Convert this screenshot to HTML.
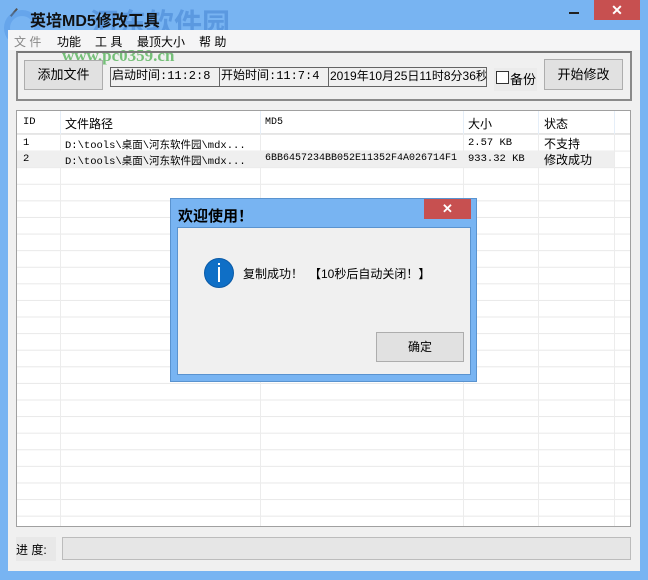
<!DOCTYPE html>
<html><head><meta charset="utf-8"><style>
*{margin:0;padding:0;box-sizing:border-box}
body{width:648px;height:580px;overflow:hidden;background:#78b4f2;font-family:"Liberation Sans","Noto Sans CJK SC",sans-serif;font-size:12px;color:#000;position:relative}
.a{position:absolute}
.client{left:8px;top:30px;width:632px;height:541px;background:#f0f0f0}
.menu{left:8px;top:30px;width:632px;height:20px;background:#f5f5f6}
.menu span{position:absolute;top:3px;font-size:12px}
.btn{background:#e1e1e1;border:1px solid #adadad;text-align:center;font-size:13px}
.tb{border:1px solid #646464;background:#f0f0f0;font-family:"Liberation Mono","Noto Sans CJK SC",monospace;font-size:12px;line-height:17px;padding-left:1px;white-space:nowrap;overflow:hidden}
.list{left:16px;top:110px;width:615px;height:417px;background:#fff;border:1px solid #a0a0a0;
background-image:linear-gradient(#e8e8e8 1px,transparent 1px);background-size:100% 16.6px;background-position:0 23px}
.vl{position:absolute;top:0;bottom:0;width:1px;background:#ececec}
.cell{position:absolute;font-family:"Liberation Mono","Noto Sans CJK SC",monospace;font-size:10.5px;white-space:nowrap}
</style></head><body>
<div class="a" style="left:12px;top:10px;width:10px;height:10px;border-left:2px solid #555;transform:rotate(40deg)"></div>
<div class="a" style="left:90px;top:2px;font-size:28px;font-weight:bold;color:#3f7fd0;opacity:.5">河东软件园</div>
<div class="a" style="left:4px;top:10px;width:36px;height:36px;border-radius:50%;border:6px solid #4a8ee0;opacity:.4"></div>
<div class="a" style="left:30px;top:7px;font-size:16px;font-weight:bold;color:#111">英培MD5修改工具</div>
<div class="a" style="left:569px;top:12px;width:10px;height:2px;background:#222"></div>
<div class="a" style="left:594px;top:0;width:46px;height:20px;background:#c75050;color:#fff;text-align:center;font-size:14px;line-height:20px;font-weight:bold">✕</div>
<div class="a client"></div>
<div class="a menu"><span style="left:6px;color:#888">文 件</span><span style="left:49px">功能</span><span style="left:87px">工 具</span><span style="left:129px">最顶大小</span><span style="left:191px">帮 助</span></div>
<div class="a" style="left:62px;top:46px;font-size:17px;font-weight:bold;color:#4caf50;opacity:.75;font-family:'Liberation Serif',serif">www.pc0359.cn</div>
<div class="a" style="left:16px;top:51px;width:616px;height:50px;border:2px solid #8a8a8a;border-top-color:#777"></div>
<div class="a btn" style="left:24px;top:60px;width:79px;height:30px;line-height:28px">添加文件</div>
<div class="a tb" style="left:110px;top:67px;width:110px;height:20px">启动时间:11:2:8</div>
<div class="a tb" style="left:219px;top:67px;width:110px;height:20px">开始时间:11:7:4</div>
<div class="a tb" style="left:328px;top:67px;width:159px;height:20px;font-family:'Liberation Sans','Noto Sans CJK SC',sans-serif">2019年10月25日11时8分36秒</div>
<div class="a" style="left:494px;top:68px;width:43px;height:23px;background:#ebebeb"></div>
<div class="a" style="left:496px;top:71px;width:13px;height:13px;border:1px solid #333;background:#fff"></div>
<div class="a" style="left:510px;top:69px;font-size:13px">备份</div>
<div class="a btn" style="left:544px;top:59px;width:79px;height:31px;line-height:29px">开始修改</div>
<div class="a list">
<div class="vl" style="left:43px"></div><div class="vl" style="left:243px"></div><div class="vl" style="left:446px"></div><div class="vl" style="left:521px"></div><div class="vl" style="left:597px"></div>
<div class="a" style="left:0;top:0;width:613px;height:23px;background:#fff;border-bottom:1px solid #e5e5e5"></div>
<div class="vl" style="left:43px;height:23px;background:#e5eef8"></div><div class="vl" style="left:243px;height:23px;background:#e5eef8"></div><div class="vl" style="left:446px;height:23px;background:#e5eef8"></div><div class="vl" style="left:521px;height:23px;background:#e5eef8"></div><div class="vl" style="left:597px;height:23px;background:#e5eef8"></div>
<div class="a" style="left:0;top:40px;width:597px;height:16px;background:#efefef"></div>
<div class="cell" style="left:6px;top:5px">ID</div><div class="cell" style="left:48px;top:4px;font-size:12px">文件路径</div><div class="cell" style="left:248px;top:6px;font-size:10px">MD5</div><div class="cell" style="left:451px;top:4px;font-size:12px">大小</div><div class="cell" style="left:527px;top:4px;font-size:12px">状态</div>
<div class="cell" style="left:6px;top:26px">1</div><div class="cell" style="left:48px;top:26px">D:\tools\桌面\河东软件园\mdx...</div><div class="cell" style="left:451px;top:26px">2.57 KB</div><div class="cell" style="left:527px;top:24px;font-size:12px">不支持</div>
<div class="cell" style="left:6px;top:42px">2</div><div class="cell" style="left:48px;top:42px">D:\tools\桌面\河东软件园\mdx...</div><div class="cell" style="left:248px;top:42px;font-size:10px">6BB6457234BB052E11352F4A026714F1</div><div class="cell" style="left:451px;top:42px">933.32 KB</div><div class="cell" style="left:527px;top:40px;font-size:12px">修改成功</div>
</div>
<div class="a" style="left:16px;top:537px;width:40px;height:24px;background:#e8e8e8"></div>
<div class="a" style="left:16px;top:541px;font-size:12px">进 度:</div>
<div class="a" style="left:62px;top:537px;width:569px;height:23px;background:#e6e6e6;border:1px solid #bcbcbc"></div>
<div class="a" style="left:170px;top:198px;width:307px;height:184px;background:#78b4f2;border:1px solid #5a93cf"></div>
<div class="a" style="left:178px;top:205px;font-size:15px;font-weight:bold">欢迎使用！</div>
<div class="a" style="left:424px;top:199px;width:47px;height:20px;background:#c75050;color:#fff;text-align:center;font-size:13px;line-height:20px;font-weight:bold">✕</div>
<div class="a" style="left:177px;top:227px;width:294px;height:148px;background:#f0f0f0;border:1px solid #5a93cf"></div>
<div class="a" style="left:204px;top:258px;width:30px;height:30px;border-radius:50%;background:#0f6fc6;border:1px solid #0b5aa6"></div>
<div class="a" style="left:218px;top:263px;width:2px;height:2px;background:#fff"></div>
<div class="a" style="left:218px;top:267px;width:2px;height:15px;background:#fff"></div>
<div class="a" style="left:243px;top:265px;font-size:12px">复制成功！　【10秒后自动关闭！】</div>
<div class="a btn" style="left:376px;top:332px;width:88px;height:30px;line-height:28px;font-size:12px">确定</div>
</body></html>
